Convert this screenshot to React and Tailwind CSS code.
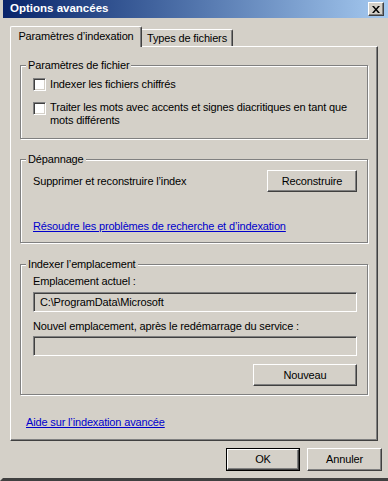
import React from "react";

const raised =
  "border border-t-white border-l-white border-r-[#404040] border-b-[#404040] shadow-[inset_-1px_-1px_0_#808080]";
const sunken =
  "border border-t-[#808080] border-l-[#808080] border-r-white border-b-white shadow-[inset_1px_1px_0_#404040,inset_-1px_-1px_0_#d4d0c8]";

function Button({ children, className = "" }) {
  return (
    <div className={`${raised} bg-[#d4d0c8] flex items-center justify-center text-black ${className}`}>
      {children}
    </div>
  );
}

function Checkbox() {
  return <div className={`${sunken} w-[13px] h-[13px] bg-white shrink-0`} />;
}

function Group({ label, className = "", children }) {
  return (
    <div
      className={`relative mx-[9px] border border-[#808080] shadow-[1px_1px_0_#fff,inset_1px_1px_0_#fff] ${className}`}
    >
      <span className="absolute -top-[8px] left-[5px] bg-[#d4d0c8] px-[2px] leading-[14px]">{label}</span>
      {children}
    </div>
  );
}

export default function App() {
  return (
    <div className="w-[388px] h-[481px] bg-[#d4d0c8] overflow-hidden font-['Liberation_Sans',Arial,sans-serif] text-[11px] tracking-[-0.15px] text-black">
      <div className="h-full flex flex-col pl-[4px] border-l-[3px] border-l-[#d4d0c8] border-b-[3px] border-b-[#404040] pr-[2px]">
        {/* title bar */}
        <div className="h-[18px] -ml-[4px] -mr-[2px] pl-[4px] pr-[4px] flex items-center justify-between bg-gradient-to-r from-[#0a246a] to-[#a6caf0]">
          <span className="pl-[3px] text-white font-bold text-[11.5px] tracking-normal leading-none">Options avancées</span>
          <div className={`${raised} bg-[#d4d0c8] w-[16px] h-[14px] flex items-center justify-center`}>
            <svg width="8" height="7" viewBox="0 0 8 7">
              <path d="M0 0h2l2 2.5L6 0h2L5 3.5 8 7H6L4 4.5 2 7H0l3-3.5z" fill="#000" />
            </svg>
          </div>
        </div>

        <div className="pl-[3px] pr-[4px] pt-[8px] flex flex-col">
          {/* tabs */}
          <div className="flex items-end h-[20px]">
            <div className="relative z-10 -mb-[1px] h-[21px] w-[132px] bg-[#d4d0c8] border-t border-l border-t-white border-l-white border-r border-r-[#404040] rounded-t-[2px] shadow-[inset_-1px_0_0_#808080] flex items-center justify-center pb-[2px]">
              Paramètres d’indexation
            </div>
            <div className="h-[17px] w-[91px] border-t border-t-white border-r border-r-[#404040] rounded-tr-[2px] shadow-[inset_-1px_0_0_#808080] flex items-center justify-center">
              Types de fichiers
            </div>
          </div>

          {/* panel */}
          <div className="h-[395px] w-[368px] border border-t-white border-l-white border-r-[#404040] border-b-[#404040] shadow-[inset_-1px_-1px_0_#808080] pt-[18px] flex flex-col">
            <Group label="Paramètres de fichier" className="h-[74px] pl-[12px] pt-[12px] flex flex-col gap-[11px]">
              <div className="flex items-start gap-[4px]">
                <Checkbox />
                <span className="leading-[13px]">Indexer les fichiers chiffrés</span>
              </div>
              <div className="flex items-start gap-[4px]">
                <Checkbox />
                <span className="leading-[13px] pr-[6px] -mt-[1px]">
                  Traiter les mots avec accents et signes diacritiques en tant que mots différents
                </span>
              </div>
            </Group>

            <Group label="Dépannage" className="mt-[20px] h-[84px] pl-[12px] pr-[10px] pt-[10px] flex flex-col">
              <div className="flex items-center justify-between">
                <span>Supprimer et reconstruire l’index</span>
                <Button className="w-[90px] h-[22px]">Reconstruire</Button>
              </div>
              <span className="mt-[28px] leading-[13px] text-[#0000cc] underline w-fit">
                Résoudre les problèmes de recherche et d’indexation
              </span>
            </Group>

            <Group label="Indexer l’emplacement" className="mt-[21px] h-[131px] pl-[12px] pr-[10px] pt-[10px] flex flex-col">
              <span className="leading-[13px]">Emplacement actuel :</span>
              <div className={`${sunken} mt-[4px] h-[20px] flex items-center pl-[6px]`}>C:\ProgramData\Microsoft</div>
              <span className="mt-[8px] leading-[13px]">Nouvel emplacement, après le redémarrage du service :</span>
              <div className={`${sunken} mt-[3px] h-[20px]`} />
              <div className="flex justify-end mt-[8px]">
                <Button className="w-[104px] h-[22px]">Nouveau</Button>
              </div>
            </Group>

            <span className="mt-[21px] ml-[15px] leading-[13px] text-[#0000cc] underline w-fit">
              Aide sur l’indexation avancée
            </span>
          </div>

          {/* dialog buttons */}
          <div className="flex justify-end gap-[7px] mt-[7px]">
            <div className="border border-black">
              <Button className="w-[72px] h-[21px]">OK</Button>
            </div>
            <Button className="w-[75px] h-[23px]">Annuler</Button>
          </div>
        </div>
      </div>
    </div>
  );
}
